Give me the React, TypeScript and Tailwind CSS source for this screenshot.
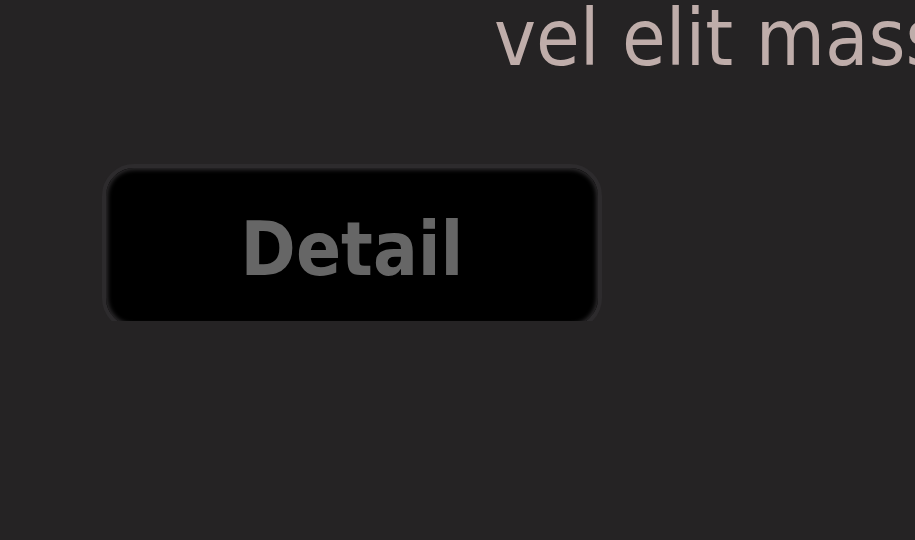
export default function App() {
  return (
    <main className="min-h-screen overflow-hidden bg-[#252324] font-['DejaVu_Sans_Condensed','DejaVu_Sans',sans-serif]">
      <p className="h-24 overflow-hidden pl-[494px] text-[79px] leading-[76px] whitespace-nowrap text-[#bfadaa]">
        vel elit mass
      </p>
      <div className="mt-17 ml-[102px] h-[157px] overflow-hidden">
        <button
          type="button"
          className="block h-[166px] w-[500px] rounded-[32px] border-4 border-[#2d2b2d] bg-black pt-1 text-[74px] leading-[80px] font-bold text-[#666666] shadow-[inset_0_0_4px_2px_#2d2b2d]"
        >
          Detail
        </button>
      </div>
    </main>
  );
}
